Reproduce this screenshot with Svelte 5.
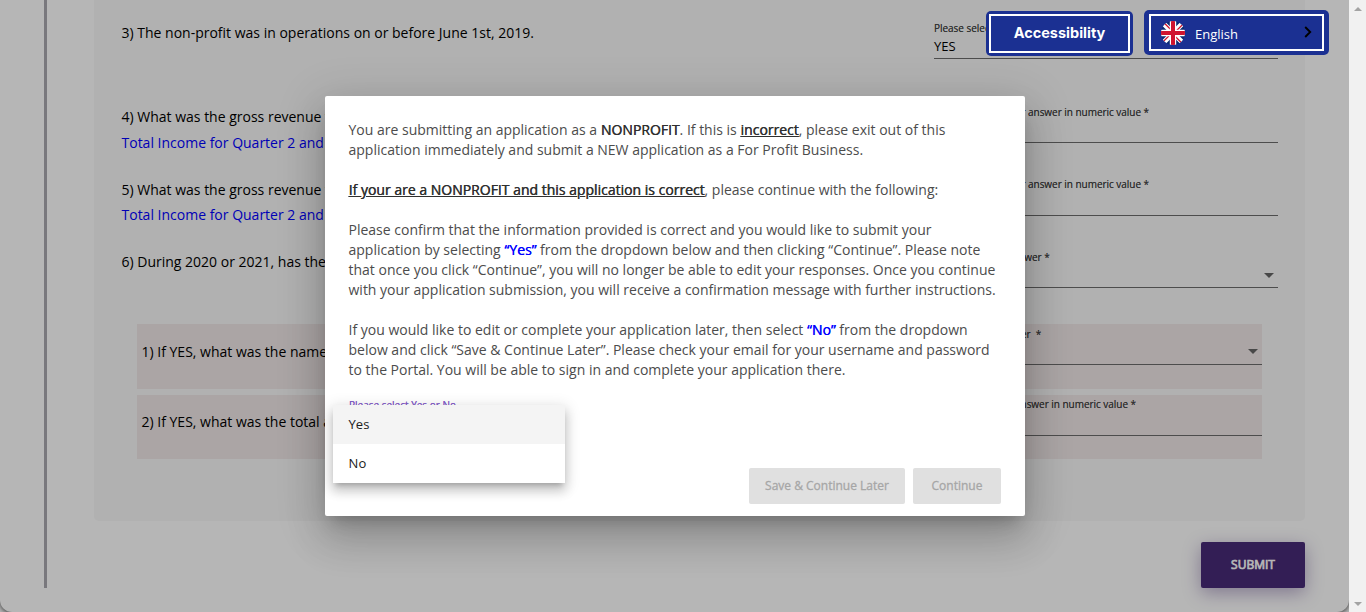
<script>
  const rows = [
    { h: 59, pad: 22, q: '3) The non-profit was in operations on or before June 1st, 2019.', label: 'Please select', value: 'YES' },
    { h: 84, pad: 47, q: '4) What was the gross revenue for', note: 'Total Income for Quarter 2 and', label: 'Please provide your answer in numeric value *' },
    { h: 73, pad: 36, q: '5) What was the gross revenue for', note: 'Total Income for Quarter 2 and', label: 'Please provide your answer in numeric value *', lift: true },
    { h: 72, pad: 35, q: '6) During 2020 or 2021, has the', label: 'Please select an answer *', arrow: true, shift: true }
  ];
  const subs = [
    { h: 65, pad: 17, line: 41, q: '1) If YES, what was the name', label: 'Please select an answer\u00a0 *', arrow: true },
    { h: 64, pad: 16, line: 41, q: '2) If YES, what was the total amount', label: 'Please provide your answer in numeric value *', lift: true }
  ];
</script>

<div class="screen">
  <div class="canvas">
    <main class="page">
      <div class="rail"></div>
      <div class="content">
        <section class="panel">
          {#each rows as r}
            <div class="row" style="height:{r.h}px">
              <div class="question" style="padding-top:{r.pad}px">
                <div>{r.q}</div>
                {#if r.note}<div class="note" class:tight={r.lift}>{r.note}</div>{/if}
              </div>
              <div class="field" class:lift={r.lift} class:shift={r.shift}>
                <span class="label">{r.label}</span>
                <span class="value">{r.value ?? ''}</span>
                {#if r.arrow}<i class="caret"></i>{/if}
              </div>
            </div>
          {/each}
          <div class="subs">
            {#each subs as s}
              <div class="sub" style="height:{s.h}px">
                <div class="question" style="padding-top:{s.pad}px">{s.q}</div>
                <div class="field" class:lift={s.lift} style="height:{s.line}px">
                  <span class="label">{s.label}</span>
                  <span class="value"></span>
                  {#if s.arrow}<i class="caret"></i>{/if}
                </div>
              </div>
            {/each}
          </div>
        </section>
        <button class="submit">SUBMIT</button>
      </div>
    </main>
  </div>
  <div class="scrollbar"><i class="up"></i><i class="down"></i></div>

  <div class="backdrop"></div>
  <div class="dialog">
    <p>You are submitting an application as a <b>NONPROFIT</b>. If this is <b class="u">incorrect</b>, please exit out of this<br />application immediately and submit a NEW application as a For Profit Business.</p>
    <p><b class="u">If your are a NONPROFIT and this application is correct</b>, please continue with the following:</p>
    <p>Please confirm that the information provided is correct and you would like to submit your<br />application by selecting <b class="blue">“Yes”</b> from the dropdown below and then clicking “Continue”. Please note<br />that once you click “Continue”, you will no longer be able to edit your responses. Once you continue<br />with your application submission, you will receive a confirmation message with further instructions.</p>
    <p>If you would like to edit or complete your application later, then select <b class="blue">“No”</b> from the dropdown<br />below and click “Save &amp; Continue Later”. Please check your email for your username and password<br />to the Portal. You will be able to sign in and complete your application there.</p>
    <div class="prompt">Please select Yes or No</div>
    <div class="actions">
      <button class="later">Save &amp; Continue Later</button>
      <button class="next">Continue</button>
    </div>
  </div>
  <div class="menu">
    <div class="option active">Yes</div>
    <div class="option">No</div>
  </div>

  <div class="tools">
    <button class="access"><span>Accessibility</span></button>
    <button class="lang">
      <span class="inner">
        <svg class="flag" viewBox="0 0 24 24">
          <defs><clipPath id="disc"><circle cx="12" cy="12" r="12" /></clipPath></defs>
          <g clip-path="url(#disc)">
            <rect width="24" height="24" fill="#0b2a72" />
            <path d="M0 0L24 24M24 0L0 24" stroke="#fff" stroke-width="5" />
            <path d="M1.2 0L12 10.8M24 1.2L13.2 12M22.8 24L12 13.2M0 22.8L10.8 12" stroke="#d0142f" stroke-width="1.3" />
            <path d="M12 0V24M0 12H24" stroke="#fff" stroke-width="6.4" />
            <path d="M12 0V24M0 12H24" stroke="#d0142f" stroke-width="4" />
          </g>
        </svg>
        <span class="name">English</span>
        <svg class="chev" viewBox="0 0 8 12"><path d="M1.2 1L6.2 6L1.2 11" fill="none" stroke="#000" stroke-width="1.9" /></svg>
      </span>
    </button>
  </div>
</div>

<style>
  :global(body) { overflow: hidden; }
  * { box-sizing: border-box; }
  button { border: 0; margin: 0; padding: 0; font-family: inherit; }
  .screen { display: flex; width: 1366px; height: 612px; font: 14px/20px "Open Sans", sans-serif; color: #000; white-space: nowrap; overflow: hidden; position: relative; }
  .canvas { width: 1349px; height: 612px; background: #fff; }
  .page { display: flex; height: 612px; padding-left: 44px; background: #fff; border-radius: 0 0 12px 12px; box-shadow: 0 1px 5px rgba(0, 0, 0, 0.7); }
  .rail { width: 3px; height: 588px; background: #aaa8b0; }
  .content { width: 1211px; margin-left: 47px; display: flex; flex-direction: column; }
  .panel { height: 521px; padding: 0 27px; background: #f8f8f8; border-radius: 0 0 5px 5px; }
  .row { display: flex; justify-content: space-between; }
  .question { flex: 1; min-width: 0; line-height: 22px; padding-left: 0.5px; }
  .note { color: #00f; margin-top: 4px; }
  .note.tight { margin-top: 3px; }
  .field { width: 344px; height: 100%; display: grid; grid-template: 1fr 17px 20px / 1fr 18px; border-bottom: 1px solid #6c6c6c; }
  .label { grid-column: 1 / 3; grid-row: 2; font-size: 10px; line-height: 14px; letter-spacing: -0.03px; color: #444; text-shadow: 0 0 0.6px rgba(0, 0, 0, 0.6); }
  .lift .label { margin-top: -1px; }
  .shift .label { margin-left: -2px; }
  .value { grid-row: 3; font-size: 13px; line-height: 16px; }
  .caret { grid-row: 3; grid-column: 2; width: 0; height: 0; border: 5px solid transparent; border-top-color: #666; border-bottom: 0; margin: 5px 0 0 4px; }
  .row .caret { margin-top: 6px; }
  .subs { display: flex; flex-direction: column; gap: 6px; margin: 36px 16px 0; }
  .sub { display: flex; background: #f0e8e8; padding-left: 4px; }
  .sub .field { width: 340px; }
  .sub .label { margin-left: -1px; }
  .submit { align-self: flex-end; width: 104px; height: 46px; margin-top: 21px; padding-bottom: 1px; border-radius: 2px; background: #482b77; color: #fff; font-size: 12px; font-weight: 400; -webkit-text-stroke: 0.7px currentColor; box-shadow: 0 5px 18px rgba(72, 43, 119, 0.4); }
  .scrollbar { width: 17px; background: #f1f1f1; display: flex; flex-direction: column; justify-content: space-between; align-items: center; padding: 7px 0 6px; }
  .up { border: 4px solid transparent; border-bottom-color: #a3a3a3; border-top: 0; }
  .down { border: 4px solid transparent; border-top-color: #a3a3a3; border-bottom: 0; }
  .backdrop { position: absolute; inset: 0 17px 0 0; background: rgba(0, 0, 0, 0.288); }
  .dialog { position: absolute; left: 325px; top: 96px; width: 700px; height: 420px; padding: 24px; border-radius: 2px; background: #fff; color: #4c4c4c; box-shadow: 0 11px 15px -7px rgba(0, 0, 0, 0.2), 0 24px 38px 3px rgba(0, 0, 0, 0.14), 0 9px 46px 8px rgba(0, 0, 0, 0.12); }
  .dialog p { margin: 0 0 20px -0.5px; }
  b { font-weight: 400; color: #303030; text-shadow: 0.4px 0 0 currentColor; }
  .u { text-decoration: underline; }
  .blue { color: #00f; }
  .prompt { font-size: 10px; line-height: 14px; color: #8560c8; margin-top: -2px; text-shadow: 0 0 0.6px #8560c8; }
  .actions { display: flex; justify-content: flex-end; gap: 8px; margin-top: 56px; }
  .actions button { height: 36px; border-radius: 2px; background: #e0e0e0; color: #a6a6a6; font-size: 12px; padding-bottom: 1px; -webkit-text-stroke: 0.3px currentColor; }
  .later { width: 156px; }
  .next { width: 88px; }
  .menu { position: absolute; left: 333px; top: 405px; width: 232px; height: 78px; background: #fff; box-shadow: 0 5px 5px -3px rgba(0, 0, 0, 0.2), 0 8px 10px 1px rgba(0, 0, 0, 0.14), 0 3px 14px 2px rgba(0, 0, 0, 0.12); }
  .option { height: 39px; line-height: 39px; padding-left: 15.6px; font-size: 13px; color: #202020; }
  .active { background: #f4f4f4; }
  .tools { position: absolute; left: 986px; top: 10px; display: flex; gap: 11px; }
  .access { width: 147px; height: 45px; margin-top: 1px; padding: 3px; background: #1b3092; border-radius: 5px; color: #fff; }
  .access span { display: block; height: 39px; border: 2px solid #fff; font: 700 14.5px/34px Inter, sans-serif; }
  .lang { width: 185px; height: 45px; padding: 5px; background: #1b3092; border-radius: 5px; color: #fff; }
  .inner { display: flex; align-items: center; height: 37px; border: 2px solid #fff; padding: 0 10px; margin-top: -1px; }
  .flag { width: 24px; height: 24px; }
  .name { margin: 2px 0 0 10px; font-size: 13px; }
  .chev { width: 8px; height: 12px; margin: -1px 0 0 auto; }
</style>
